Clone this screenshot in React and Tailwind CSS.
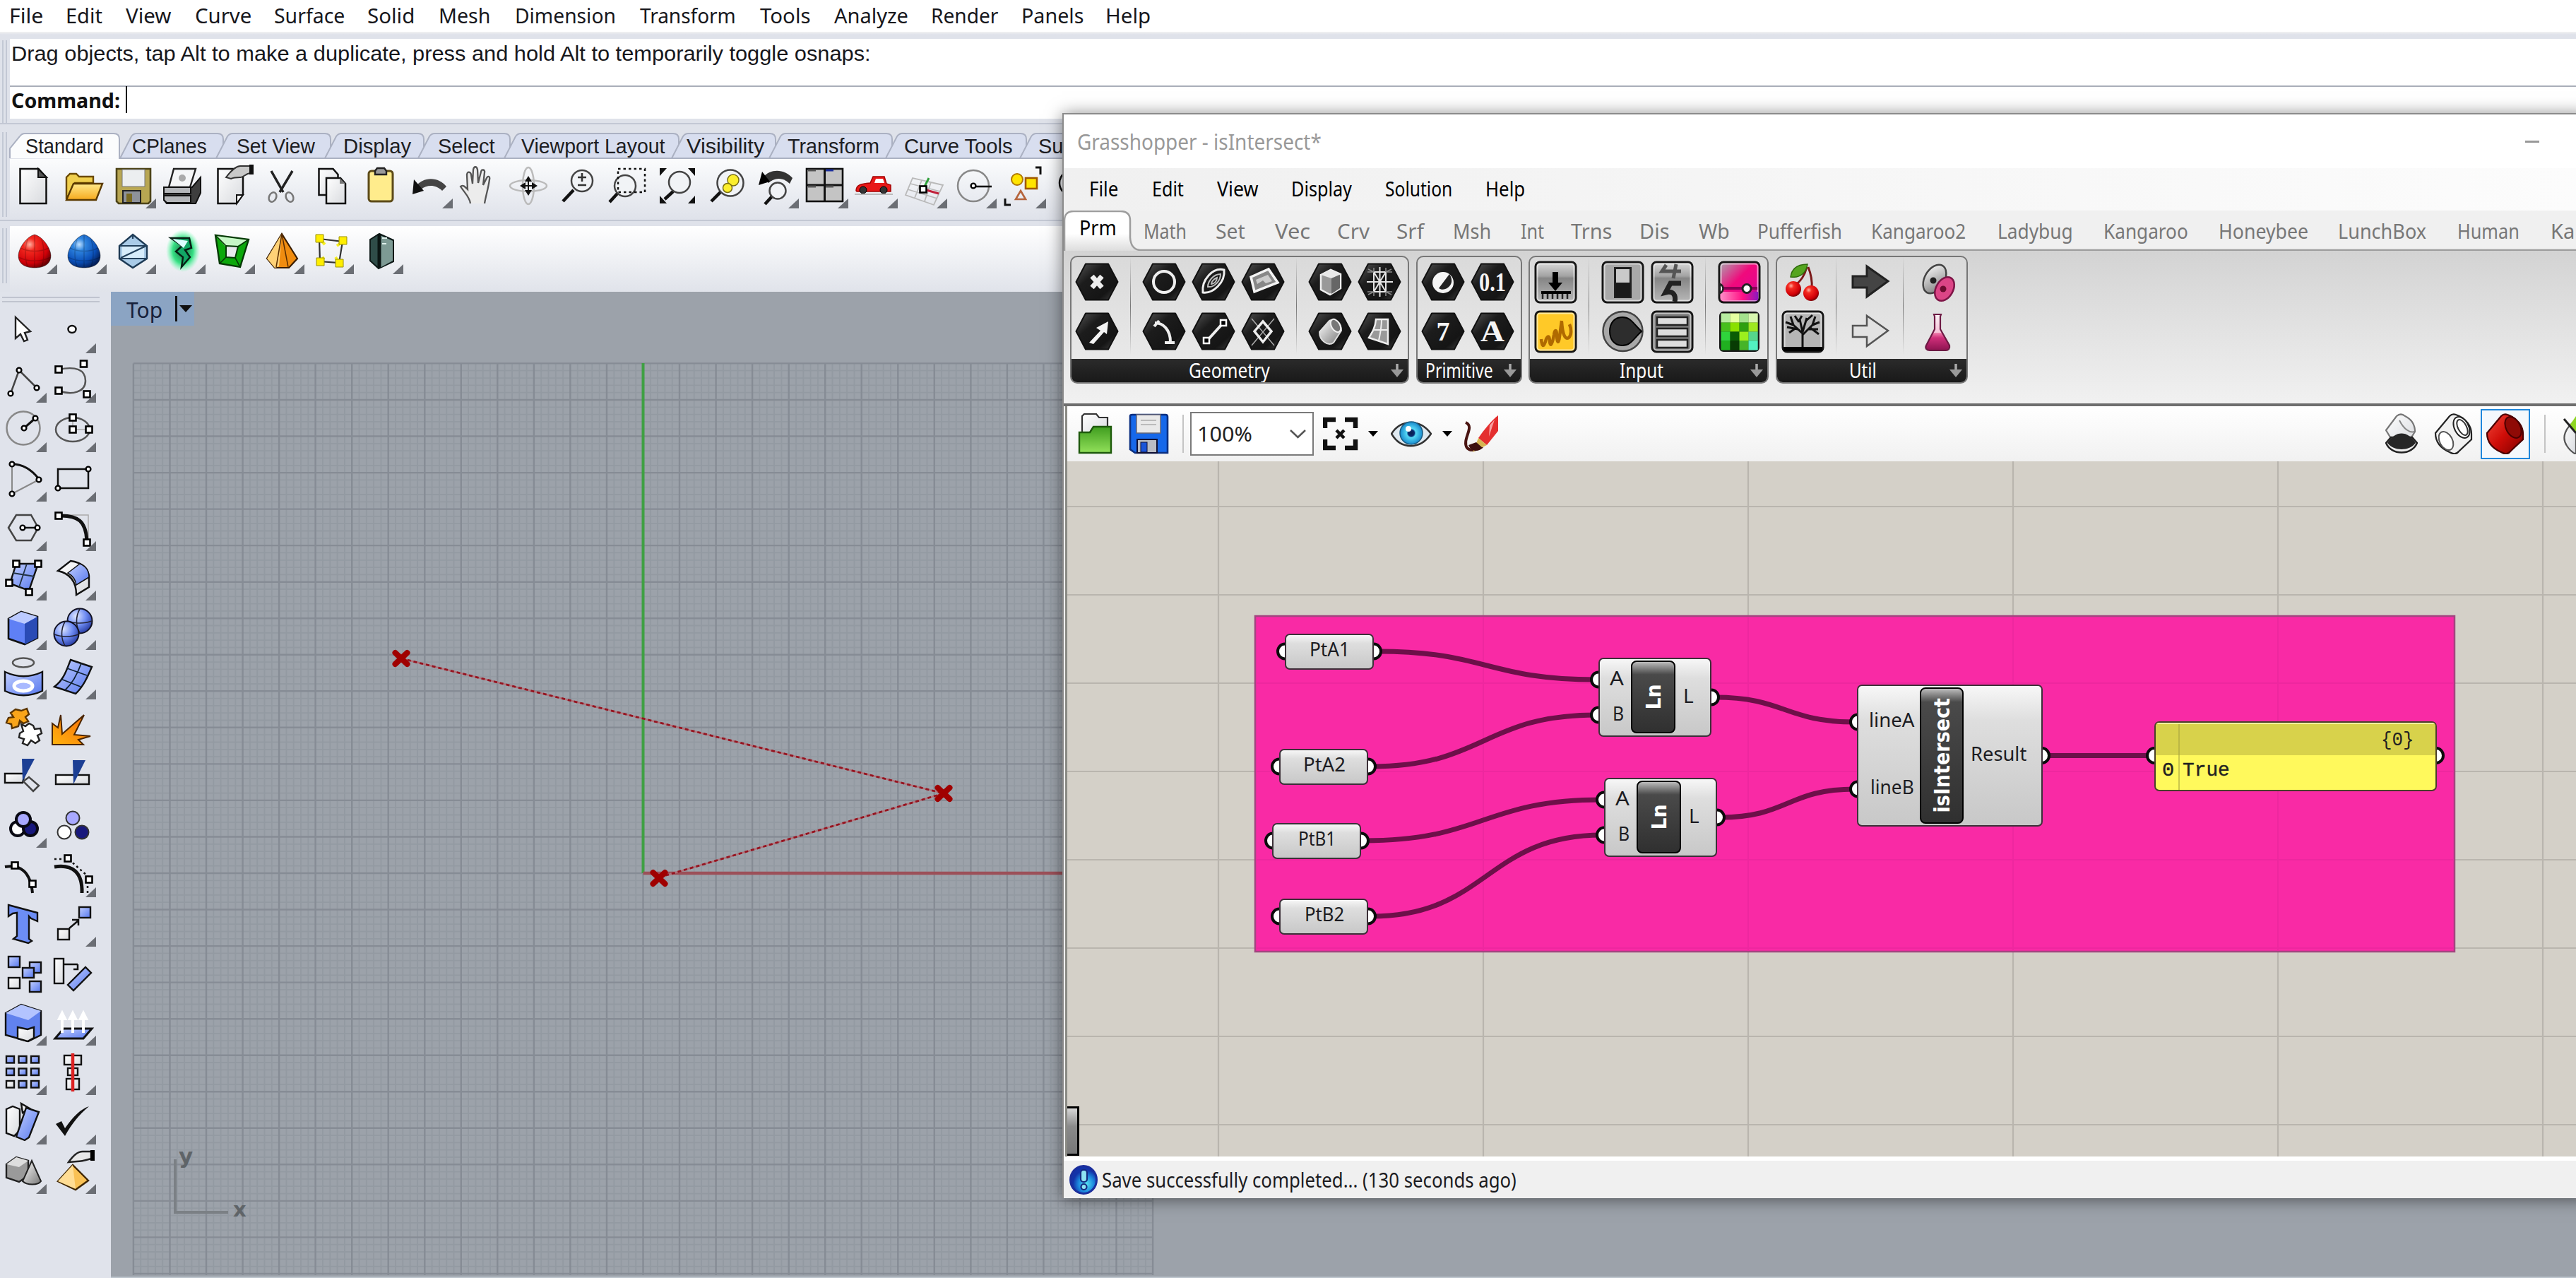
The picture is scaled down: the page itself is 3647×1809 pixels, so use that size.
import React, { useLayoutEffect, useRef, useState } from "react";

const NOTO = "font-['Noto_Sans',sans-serif]";
const ARIAL = "font-['Liberation_Sans',sans-serif]";

/* Text squeezed or stretched horizontally to a given width. */
function Fit({ w, children, className = "" }) {
  const ref = useRef(null);
  const [scale, setScale] = useState(1);
  useLayoutEffect(() => {
    if (ref.current.offsetWidth) setScale((w + 3) / ref.current.offsetWidth);
  }, [w, children]);
  return (
    <span className={"block shrink-0 whitespace-nowrap " + className} style={{ width: w }}>
      <span ref={ref} className="inline-block origin-left whitespace-pre" style={{ transform: `translateX(-1px) scaleX(${scale})` }}>
        {children}
      </span>
    </span>
  );
}

/* A run of labels; each item is [text, start, width]. */
function Labels({ items, origin = 0, className = "" }) {
  let x = origin;
  return (
    <div className={"flex items-center " + className}>
      {items.map(([t, s, w]) => {
        const gap = s - x;
        x = s + w;
        return (
          <div key={t + s} className="shrink-0" style={{ marginLeft: gap }}>
            <Fit w={w}>{t}</Fit>
          </div>
        );
      })}
    </div>
  );
}

const rhinoMenu = [
  ["File", 14, 45], ["Edit", 94, 49], ["View", 179, 61], ["Curve", 277, 77], ["Surface", 389, 97], ["Solid", 521, 64],
  ["Mesh", 622, 70], ["Dimension", 730, 140], ["Transform", 907, 133], ["Tools", 1077, 69], ["Analyze", 1182, 102],
  ["Render", 1319, 92], ["Panels", 1447, 85], ["Help", 1566, 61],
];

const rhinoTabs = [
  ["Standard", 14, 170, 37, 108], ["CPlanes", 168, 316, 188, 103], ["Set View", 304, 468, 336, 108], ["Display", 458, 600, 487, 93],
  ["Select", 590, 722, 621, 78], ["Viewport Layout", 712, 961, 739, 200], ["Visibility", 949, 1098, 973, 107],
  ["Transform", 1087, 1263, 1116, 127], ["Curve Tools", 1252, 1453, 1281, 151], ["Su", 1442, 1660, 1471, 32],
];

const K = { fill: "none", stroke: "#111", strokeWidth: 2.5 };
const Sq = ({ x, y, s = 9 }) => <rect x={x - s / 2} y={y - s / 2} width={s} height={s} fill="#fff" stroke="#000" strokeWidth="2.6" />;
const Dot = ({ x, y, r = 3.4 }) => <circle cx={x} cy={y} r={r} fill="#fff" stroke="#000" strokeWidth="2.4" />;
const Handle = ({ x1, y1, x2, y2 }) => <path d={`M${x1} ${y1}L${x2} ${y2}`} stroke="#111" strokeWidth="4.5" />;
const Lens = ({ x, y, r }) => <circle cx={x} cy={y} r={r} fill="#f1f3f6" stroke="#444" strokeWidth="2.5" />;

function Defs() {
  return (
    <svg className="absolute size-0">
      <defs>
        <linearGradient id="blue" x1="0" y1="0" x2="1" y2="1"><stop offset="0" stopColor="#c3d0ff" /><stop offset="1" stopColor="#5577ee" /></linearGradient>
        <linearGradient id="gold" x1="0" y1="0" x2="0" y2="1"><stop offset="0" stopColor="#ffe98a" /><stop offset="1" stopColor="#f5a91c" /></linearGradient>
        <linearGradient id="paper" x1="0" y1="0" x2="1" y2="1"><stop offset="0" stopColor="#fff" /><stop offset="1" stopColor="#d8dade" /></linearGradient>
        <linearGradient id="steel" x1="0" y1="0" x2="0" y2="1"><stop offset="0" stopColor="#dcdcdc" /><stop offset=".35" stopColor="#a2a2a2" /><stop offset=".4" stopColor="#858585" /><stop offset="1" stopColor="#b9b9b9" /></linearGradient>
        <linearGradient id="hex" x1="0" y1="0" x2="1" y2="1"><stop offset="0" stopColor="#555" /><stop offset=".35" stopColor="#1c1c1c" /><stop offset=".75" stopColor="#151515" /><stop offset="1" stopColor="#444" /></linearGradient>
        <linearGradient id="solid" x1="0" y1="0" x2="1" y2="1"><stop offset="0" stopColor="#fff" /><stop offset="1" stopColor="#777" /></linearGradient>
        <linearGradient id="green" x1="0" y1="0" x2="0" y2="1"><stop offset="0" stopColor="#3f9d1f" /><stop offset="1" stopColor="#92e05a" /></linearGradient>
        <linearGradient id="redpipe" x1="0" y1="0" x2="1" y2="1"><stop offset="0" stopColor="#f2483a" /><stop offset=".5" stopColor="#cf0d08" /><stop offset="1" stopColor="#7d0000" /></linearGradient>
        <linearGradient id="pinkbox" x1="0" y1="0" x2="1" y2="1"><stop offset="0" stopColor="#a9a9b0" /><stop offset=".45" stopColor="#f00a7c" /><stop offset=".7" stopColor="#e8078a" /><stop offset="1" stopColor="#7a10b8" /></linearGradient>
        <linearGradient id="pinkbase" x1="0" y1="0" x2="1" y2="0"><stop offset="0" stopColor="#ff8cc6" /><stop offset=".6" stopColor="#ff0f84" /><stop offset="1" stopColor="#8a18c0" /></linearGradient>
        <linearGradient id="lava" x1="0" y1="0" x2="0" y2="1"><stop offset="0" stopColor="#fbf3f7" /><stop offset=".5" stopColor="#f6c2d8" /><stop offset=".51" stopColor="#f284b0" /><stop offset=".65" stopColor="#cf2f7a" /><stop offset="1" stopColor="#8d1350" /></linearGradient>
        <linearGradient id="flame" x1="0" y1="1" x2="1" y2="0"><stop offset="0" stopColor="#ffb30f" /><stop offset="1" stopColor="#f76b0a" /></linearGradient>
        <radialGradient id="eggR" cx=".35" cy=".3" r=".75"><stop offset="0" stopColor="#ffb0a0" /><stop offset=".25" stopColor="#f42a20" /><stop offset=".75" stopColor="#d00008" /><stop offset="1" stopColor="#6c0004" /></radialGradient>
        <radialGradient id="eggB" cx=".35" cy=".3" r=".75"><stop offset="0" stopColor="#bfe0ff" /><stop offset=".25" stopColor="#2f85e0" /><stop offset=".7" stopColor="#0a4fb8" /><stop offset="1" stopColor="#04215c" /></radialGradient>
        <radialGradient id="ball" cx=".35" cy=".3" r=".8"><stop offset="0" stopColor="#dfe7ff" /><stop offset=".5" stopColor="#6f8cf2" /><stop offset="1" stopColor="#1c2f96" /></radialGradient>
        <radialGradient id="glow"><stop offset="0" stopColor="#1f6b45" /><stop offset=".6" stopColor="#35e083" /><stop offset="1" stopColor="#6dffb0" stopOpacity="0" /></radialGradient>
        <radialGradient id="iris"><stop offset="0" stopColor="#0b1d4a" /><stop offset=".28" stopColor="#082a70" /><stop offset=".4" stopColor="#55d8f5" /><stop offset="1" stopColor="#1889cc" /></radialGradient>
        <radialGradient id="info" cx=".6" cy=".65"><stop offset="0" stopColor="#58e6f2" /><stop offset=".6" stopColor="#1b86dd" /><stop offset="1" stopColor="#1333a8" /></radialGradient>
      </defs>
    </svg>
  );
}

const topIcons = [
  [<g><path d="M16.500 13h26l11 12v37h-37z" fill="url(#paper)" {...{ stroke: "#111", strokeWidth: 2.5 }} /><path d="M42 13v12h12z" fill="#555" stroke="#111" strokeWidth="2" /></g>],
  [<g><path d="M12 56V25l5-5h9l4 4h20v9H24z" fill="#f0cf4e" stroke="#6b4a00" strokeWidth="2.4" /><path d="M12 57L22 34h41L54 57z" fill="url(#gold)" stroke="#5a3a00" strokeWidth="2.400" /></g>],
  [<g><path d="M13 13h48v46l-3 3H16l-3-3z" fill="#b8a652" stroke="#4d4418" strokeWidth="2.6" /><rect x="21" y="14" width="32" height="24" fill="#eceef0" stroke="#777" /><path d="M22 44h25v17H22z" fill="#8e929a" stroke="#222" strokeWidth="2" /><rect x="27" y="48" width="8" height="12" fill="#7a6a22" /></g>, 1],
  [<g><path d="M24 13h31l-8 26H17z" fill="#f5f6f7" stroke="#222" strokeWidth="2.4" /><circle cx="36" cy="26" r="5" fill="#aaa" /><path d="M10 39h40l12-14v22l-7 15H14l-4-5z" fill="#3e3e3e" stroke="#111" strokeWidth="2" /><path d="M10 39h38v9H10zM10 51h38v10H14l-4-4z" fill="#b5b7ba" stroke="#111" strokeWidth="2" /></g>],
  [<g><path d="M16.500 13H52v36l-9 13H16.500z" fill="url(#paper)" stroke="#111" strokeWidth="2.5" /><path d="M43 62V50h9z" fill="#fff" stroke="#111" strokeWidth="2" /><path d="M28 25c6-8 12-15 20-16h14v10c-7 1-10 7-14 6-5 0-9 0-13 2z" fill="#c9c9c9" stroke="#333" strokeWidth="2" /><rect x="61" y="7" width="6" height="14" fill="#111" /></g>],
  [<g><path d="M22 16l17 30M52 16L34 46" stroke="#222" strokeWidth="3.500" /><ellipse cx="24" cy="53" rx="5" ry="7" {...K} stroke="#777" transform="rotate(25 24 53)" /><ellipse cx="48" cy="53" rx="5" ry="7" {...K} stroke="#777" transform="rotate(-25 48 53)" /></g>],
  [<g><path d="M19.500 13h20l7 8v29h-27z" fill="url(#paper)" stroke="#111" strokeWidth="2.5" /><path d="M30 26h20l7 8v28H30z" fill="url(#paper)" stroke="#111" strokeWidth="2.5" /><path d="M49 26v8h8z" fill="#777" /></g>],
  [<g><rect x="20" y="16" width="34" height="43" rx="4" fill="#ffec8c" stroke="#5c4a18" strokeWidth="3" /><path d="M29 21v-5l3-4h10l3 4v5z" fill="#999" stroke="#222" strokeWidth="2.4" /></g>],
  [<g><path d="M18 36c12-13 32-11 42 2l-6 6c-9-9-21-9-30-2z" fill="#444" /><path d="M12 49l2-21 14 16z" fill="#111" /></g>, 1],
  [<path d="M24 62c-1-9-9-16-14-24 3-3 6 0 10 4l-1-21c1-5 5-4 6 0l2 13 1-20c1-5 5-5 6 0l1 19 4-16c1-4 6-3 5 1l-2 18 5-10c2-4 5-2 4 2-2 14-5 22-7 34" fill="#ececec" stroke="#555" strokeWidth="2.300" />],
  [<g><ellipse cx="36" cy="37" rx="8" ry="26" {...K} stroke="#bbb" /><ellipse cx="36" cy="37" rx="26" ry="8" {...K} stroke="#bbb" /><path d="M36 23l5 8H31zM36 51l5-8H31zM24 37l8-5v10zM49 37l-8-5v10z" fill="#111" /><path d="M36 26v22M26 37h20" stroke="#111" strokeWidth="2" /></g>],
  [<g><Handle x1={30} y1={43} x2={15} y2={59} /><Lens x={42} y={30} r={15} /><path d="M42 19v12M36 25h12M36 36h12" stroke="#333" strokeWidth="2.600" /></g>],
  [<g><Handle x1={22} y1={48} x2={11} y2={60} /><Lens x={33} y={37} r={15} /><rect x="23" y="13" width="38" height="33" {...K} strokeDasharray="3.500 4" /></g>],
  [<g><Handle x1={31} y1={45} x2={19} y2={56} /><Lens x={40} y={32} r={15} /><path d="M12 12h10L12 23zM62 12H52l10 11zM12 62h10L12 51zM62 62H52l10-11z" fill="#111" /></g>],
  [<g><Handle x1={29} y1={45} x2={15} y2={59} /><Lens x={42} y={33} r={18.500} /><circle cx="46" cy="29" r="8" fill="#fbee2c" stroke="#776c10" strokeWidth="1.500" /><circle cx="38" cy="40" r="6.500" fill="#fbee2c" stroke="#776c10" strokeWidth="1.500" /></g>],
  [<g><path d="M18 25c12-14 32-11 42 1l-4 8c-9-9-21-9-30-1z" fill="#333" /><path d="M12 36l5-19 11 14z" fill="#000" /><Handle x1={31} y1={52} x2={21} y2={63} /><Lens x={39} y={44} r={11.500} /></g>, 1],
  [<g><rect x="10" y="13" width="51" height="46" fill="#c4c4c4" stroke="#111" strokeWidth="2.600" /><path d="M35.500 13v46M10 36h51" stroke="#111" strokeWidth="3" /><path d="M12 15h11M12 38h11M37 38h11" stroke="#555" strokeWidth="3" /><path d="M37 15h11" stroke="#1c2f9c" strokeWidth="3" /></g>, 1],
  [<g><path d="M10 44c0-8 6-10 20-11l4-9h16l3 10 6 2v9H11z" fill="#e81818" stroke="#a30000" strokeWidth="1.500" /><path d="M36 33l2-6h10l2 6z" fill="#fff" /><circle cx="20" cy="43" r="5" fill="#333" stroke="#000" /><circle cx="49" cy="43" r="5" fill="#333" stroke="#000" /><path d="M8 49h54" stroke="#bbb" strokeWidth="2" /></g>, 1],
  [<g><path d="M20 26L10 50l40 14 13-28zM17 34l42 11M13 42l42 13M33 29L23 54M46 32L37 59" {...K} stroke="#b9b9b9" strokeWidth="1.800" /><path d="M36 40l7-14" stroke="#2fa03a" strokeWidth="3" /><path d="M36 42l21 6" stroke="#c0203a" strokeWidth="3" /><Sq x={35} y={42} /></g>, 1],
  [<g><circle cx="36" cy="37" r="22" {...K} stroke="#888" /><path d="M36 38h26" stroke="#111" strokeWidth="2.600" /><Dot x={36} y={37} /></g>, 1],
  [<g><path d="M54 11h7v10M11 55v9h8" {...K} strokeWidth="3" /><circle cx="28" cy="28" r="8" fill="#ffe400" stroke="#b07800" strokeWidth="2" /><rect x="40" y="26" width="16" height="15" fill="#ffe400" stroke="#a05a00" strokeWidth="2.600" /><path d="M33 44l7 12H26z" fill="none" stroke="#b5643c" strokeWidth="2.600" /></g>, 1],
  [<circle cx="36" cy="33" r="18" {...K} />],
];

const Egg = ({ id }) => (
  <g><path d="M37 13c12 3 23 20 23 30 0 12-10 17-23 17s-23-5-23-17c0-10 11-27 23-30z" fill={`url(#${id})`} stroke="#222" strokeOpacity=".5" /><path d="M37 14v45M17 32c12 6 28 6 40 0M14 45c15 7 31 7 46 0M27 20c-4 12-4 28 0 38M47 20c4 12 4 28 0 38" fill="none" stroke="#000" strokeOpacity=".2" strokeWidth="1.500" /></g>
);

const subIcons = [
  <Egg id="eggR" />,
  <Egg id="eggB" />,
  <g><path d="M36 13l20 16v18L36 60 17 47V29z" fill="#a9cbe8" stroke="#1d3a55" strokeWidth="2.400" /><path d="M21 30h31v16H21z" fill="#d6ecfb" /><path d="M17 29h39M17 47h39M19 46l36-17M36 13v6" stroke="#22405c" strokeWidth="2.200" /></g>,
  <g><ellipse cx="37" cy="36" rx="24" ry="30" fill="url(#glow)" /><path d="M20 18h26l3 14-9 3 7 10-12 14 2-14-10-8 9-8z" fill="#12a765" stroke="#061f14" strokeWidth="2.500" /><path d="M22 19l22 3-6 10z" fill="#dff" /></g>,
  <g><path d="M13 14l47 6-12 39-29-5z" fill="#0ca80c" stroke="#063a06" strokeWidth="2.400" /><path d="M14 15l45 6-16 9-14 2z" fill="#c7f7c7" /><path d="M28 29l17 1-4 16-13-1z" fill="#e9e9ee" stroke="#063a06" strokeWidth="2" /><path d="M13 14l15 15M60 20L45 30M48 59l-7-13M19 54l9-9" stroke="#063a06" strokeWidth="1.600" /></g>,
  <g><path d="M37 12L16 47l11 13h20l12-13z" fill="#f08c10" stroke="#3a1d00" strokeWidth="2.200" /><path d="M37 12L16 47l11 13 6-2z" fill="#ffd277" /><path d="M37 12l-8 47M37 12l9 47" stroke="#5a2d00" strokeWidth="1.500" /></g>,
  <g><path d="M20 19l33 4-5 30-27-2z" fill="none" stroke="#333" strokeWidth="2.200" /><path d="M20 19l8 8M53 23l-8 6M48 53l-5-8M21 51l6-6" stroke="#f6ee20" strokeWidth="4" /><path d="M15 13h11v11H15zM48 16h11v11H48zM43 48h11v11H43zM16 46h11v11H16z" fill="#ffee00" stroke="#9a9000" /></g>,
  <g><path d="M22 20l13-8 20 9v30L34 61 22 50z" fill="#2f4c48" stroke="#0e1a18" strokeWidth="2" /><path d="M36 14l18 8v28L36 60z" fill="#7d9a94" /><path d="M35 12v48" stroke="#0b1513" strokeWidth="5" /><path d="M39 18h7M39 26h6" stroke="#dff0ec" strokeWidth="2" /></g>,
];

const B = { fill: "url(#blue)", stroke: "#111", strokeWidth: 2.4 };
const W = { fill: "url(#paper)", stroke: "#111", strokeWidth: 2.4 };

const sideIcons = [
  [[<path d="M22 17v30l7-6 5 10 5-2-4-10 8-2z" fill="#fff" stroke="#222" strokeWidth="2.400" />], [<ellipse cx="32" cy="34" rx="5.500" ry="5" {...K} fill="#fff" />, 1]],
  [[<g><path d="M15 55L27 22l25 25" {...K} stroke="#444" /><Dot x={15} y={55} /><Dot x={27} y={22} /><Dot x={52} y={47} /></g>, 1], [<g><path d="M13 21c24-5 38 0 38 16S32 58 13 51" {...K} stroke="#555" /><Sq x={13} y={21} /><Sq x={13} y={51} /><Sq x={48.500} y={13} /><Sq x={53} y={56} /></g>, 1]],
  [[<g><circle cx="33" cy="34" r="23.500" {...K} stroke="#888" /><path d="M34 34l16-14" {...K} strokeWidth="3" /><Dot x={34} y={34} /><Dot x={50} y={20} /></g>, 1], [<g><ellipse cx="33" cy="36" rx="24" ry="17" {...K} stroke="#555" /><path d="M33 19v17h22" {...K} stroke="#aaa" strokeWidth="1.500" /><Sq x={33} y={36} /><Sq x={33} y={19} /><Sq x={56} y={36} /></g>, 1]],
  [[<g><path d="M17 15v42l38-20" {...K} stroke="#888" strokeWidth="2" /><path d="M17 15c16 0 28 8 38 21" {...K} strokeWidth="3" /><Dot x={17} y={15} /><Dot x={55} y={37} /><Dot x={17} y={57} /></g>, 1], [<g><rect x="12" y="22" width="43" height="27" {...K} /><Dot x={55} y={22} /><Dot x={12} y={49} /></g>, 1]],
  [[<g><path d="M12 35l11-18h21l10 18-10 18H23z" {...K} stroke="#444" /><path d="M32 35h21" {...K} /><Dot x={32} y={35} /><Dot x={53} y={35} /></g>, 1], [<g><path d="M13 17h42v38" {...K} stroke="#aaa" strokeWidth="1.500" /><path d="M13 18c28-1 39 8 40 37" {...K} strokeWidth="5" /><Sq x={13} y={18} /><Sq x={53} y={56} /></g>, 1]],
  [[<g><path d="M23 16h31L41 54 14 44z" {...B} /><path d="M38 16L27 49M18 29l31 5" stroke="#234" strokeWidth="1.800" /><Sq x={23} y={16} /><Sq x={54} y={16} /><Sq x={13} y={43} /><Sq x={41} y={56} /></g>, 1], [<g><path d="M12 26l18-14c14 2 24 9 26 21v16L38 60c0-18-8-30-26-34z" {...W} /><path d="M26 29l17-13c8 3 13 9 13 19L38 46c-1-8-5-13-12-17z" fill="url(#blue)" stroke="#111" strokeWidth="1.500" /></g>, 1]],
  [[<g><path d="M12 24l18-10 23 7v30l-18 9-23-8z" fill="#5f80f5" stroke="#111" strokeWidth="2.600" /><path d="M12 24l18-10 23 7-18 10z" fill="#bccbff" /><path d="M53 21v30l-18 9V31z" fill="#2a4bb5" /></g>, 1], [<g><circle cx="43" cy="27" r="17.500" fill="url(#ball)" stroke="#112" strokeWidth="2" /><path d="M26 27c10 4 24 4 34 0M43 10c-6 10-6 24 0 34" {...K} stroke="#223" strokeWidth="1.600" /><circle cx="24" cy="45" r="17.500" fill="url(#ball)" stroke="#112" strokeWidth="2" /><path d="M7 46c10 4 24 4 34 0M22 28c-6 10-6 24 0 34" {...K} stroke="#223" strokeWidth="1.600" /></g>, 1]],
  [[<g><ellipse cx="33" cy="16" rx="15" ry="6.500" {...K} stroke="#555" /><path d="M7 29c17 8 36 8 53 0v27c-17 8-36 8-53 0z" {...B} /><ellipse cx="33" cy="49" rx="13" ry="7" fill="#a9b9ff" stroke="#fff" strokeWidth="5" /></g>, 1], [<g><path d="M30 12l30 10c-6 14-12 28-23 38L7 50c14-10 18-26 23-38z" {...B} /><path d="M25 24l28 10M16 39l28 11M45 17c-5 14-12 28-23 38" {...K} stroke="#123" strokeWidth="1.800" /></g>, 1]],
  [[<g><path d="M22 12l8 2 8-3 3 8-5 4 4 6-7 3-5-4-2 8-9 3-1-6-7-2 3-7 7-1-4-6z" fill="#f9a51a" stroke="#5b3500" strokeWidth="2.400" /><path d="M30 33l6 3 5-4 6 3 2 5 8-1 2 7-6 3 3 7-6 4-6-4-5 7-7-3 2-6-7-2 1-6 5-3z" fill="#fff" stroke="#222" strokeWidth="2.400" /></g>], [<path d="M4 62V32l8 6 4-18 2 27 31-27-14 28 23 2-17 5 7 7z" fill="url(#flame)" stroke="#4b2500" strokeWidth="2" />]],
  [[<g><path d="M7 33h28l-3 13H7z" {...W} /><path d="M33 44l8-6 14 12-8 8z" {...K} stroke="#444" /><path d="M31 12h18L32 44z" fill="#1c3f94" /></g>], [<g><rect x="9" y="35" width="47" height="13" {...W} /><path d="M33 14h18L34 48z" fill="#1c3f94" /></g>]],
  [[<g stroke="#0a0a14" strokeWidth="4"><circle cx="25" cy="41" r="10" fill="#fff" /><circle cx="43" cy="41" r="10" fill="#18187c" /><circle cx="33" cy="28" r="10" fill="#a9a9ff" /></g>, 1], [<g stroke="#333" strokeWidth="2"><circle cx="21" cy="46" r="9.500" fill="#fff" /><circle cx="46" cy="46" r="9.500" fill="#18187c" /><circle cx="33" cy="26" r="9.500" fill="#a9a9ff" /></g>]],
  [[<g><path d="M7 25c22-4 36 7 39 37" {...K} strokeWidth="4" /><Sq x={21} y={23} /><Sq x={46} y={49} /></g>], [<g><path d="M7 25c26-4 40 8 39 37" {...K} strokeWidth="5" /><path d="M7 14h20l27 24v24" {...K} strokeDasharray="3 4" /><Sq x={26} y={13} /><Sq x={56} y={43} /></g>, 1]],
  [[<path d="M12 9l41 11v12l-9-4-3-3v32l4 3-5 3-21-6 5-4V20l-6 1-6 4z" fill="#6c8df5" stroke="#111" strokeWidth="2.400" />], [<g><rect x="12" y="43" width="16" height="15" {...W} /><rect x="42" y="12" width="16" height="15" {...B} /><path d="M28 42l13-11M32 30h9v8" {...K} /></g>, 1]],
  [[<g><rect x="12" y="12" width="16" height="15" {...B} /><rect x="42" y="20" width="16" height="15" {...B} /><rect x="32" y="28" width="16" height="14" {...B} /><rect x="12" y="42" width="16" height="15" {...W} /><rect x="42" y="47" width="16" height="15" {...B} /></g>], [<g><rect x="7" y="15" width="13" height="35" {...W} /><path d="M20 23h20M34 30h6v-7" {...K} /><path d="M26 52l25-25 8 8-25 25z" {...B} /></g>]],
  [[<g><path d="M8 22l22-12 28 9v34l-18 9-32-9z" fill="#6182ee" stroke="#111" strokeWidth="2.400" /><path d="M8 22l22-12 28 9-18 13z" fill="#b3c4ff" /><path d="M25 42l14 3 9-3v15l-9 5-14-4z" {...W} /></g>, 1], [<g><path d="M8 58l12-14h40L48 58z" {...B} strokeWidth="3" /><path d="M18 50V30h-4l4-8 4 8h-4zM33 50V30h-4l4-8 4 8h-4zM48 50V30h-4l4-8 4 8h-4z" fill="#fff" stroke="#fff" strokeWidth="4" /></g>, 1]],
  [[<g>{[0, 1, 2].map((r) => [0, 1, 2].map((c) => <rect key={r + "" + c} x={9 + 17.500 * c} y={13 + 17.500 * r} width="11" height="9.500" {...(r === 2 && c === 0 ? W : B)} />))}</g>, 1], [<g><rect x="21" y="12" width="24" height="13" {...W} /><rect x="26" y="30" width="14" height="10" {...W} /><rect x="24" y="45" width="18" height="15" {...W} /><path d="M33 9v54" stroke="#d22" strokeWidth="4.500" /></g>, 1]],
  [[<g><path d="M9 18l9-4 10 4v30l-8 8-11-4z" {...W} /><path d="M30 10l12 7-10 6z" {...W} /><path d="M37 16l18 6-14 36-6 4-12-5z" {...B} /></g>, 1], [<path d="M9 39l8-4 5 10C34 28 44 18 56 14 42 26 32 38 22 56z" fill="#111" />, 1]],
  [[<g><path d="M9 26l14-10 17 5v21l-13 9-18-6z" fill="#9a9a9a" stroke="#222" strokeWidth="2.400" /><path d="M9 26l14-10 17 5-13 9z" fill="#ddd" /><path d="M45 21l13 29c-4 6-20 6-26 0z" fill="url(#solid)" stroke="#222" strokeWidth="2" /></g>, 1], [<g><path d="M12 50l21-23 22 22-18 13z" fill="#f9c155" stroke="#3f2600" strokeWidth="2.400" /><path d="M33 27l4 34L12 50z" fill="#ffdd94" /><path d="M27 23c6-8 12-15 20-15h12v10c-7 2-12 4-20 4z" fill="#e8e8e8" stroke="#222" strokeWidth="2.400" /><rect x="58" y="6" width="6" height="15" fill="#000" /></g>, 1]],
];

function Cell({ icon, tri, side }) {
  return (
    <svg viewBox="0 0 70 70" className="size-[70px] shrink-0 overflow-visible">
      {icon}
      {tri ? <path d={side ? "M66 54v14H51z" : "M69 55v14H54z"} fill="#6b6e74" /> : null}
    </svg>
  );
}

function Grip({ className }) {
  return <div className={"w-[7px] border-x-2 border-[#c3c8d4] " + className} />;
}

function RhinoTabs() {
  return (
    <div className={"ml-[14px] flex h-[37px] text-[29px] leading-[39px] text-[#1d1d22] " + ARIAL}>
      {rhinoTabs.map(([t, a, b, tx, tw], i) => {
        const next = rhinoTabs[i + 1] ? rhinoTabs[i + 1][1] : b;
        const w = b - a;
        return (
          <div key={t} className="relative shrink-0" style={{ width: next - a }}>
            <svg className="absolute left-0 top-0 overflow-visible" width={w} height="37">
              <path d={i ? `M2 36L18 5q3-4 7-4H${w - 8}q8 0 8 8V36` : `M0 36V22L14 5q3-4 7-4H${w - 9}q8 0 8 8V37`} fill={i ? "#d8deef" : "#fbfcfd"} stroke="#abb1c2" strokeWidth="2" />
              {i ? <path d={`M0 36H${w}`} stroke="#abb1c2" strokeWidth="2" /> : null}
            </svg>
            <div className="relative" style={{ marginLeft: tx - a }}><Fit w={tw}>{t}</Fit></div>
          </div>
        );
      })}
    </div>
  );
}

const GX = 753.5, GY = 823, P = 51.54;
function Viewport() {
  const minor = [], major = [];
  for (let i = -70; i <= 70; i++) {
    const x = GX + (i * P) / 5;
    const d = `M${x.toFixed(1)} ${GY - 14 * P}V1392`;
    (i % 5 ? minor : major).push(d);
    const y = GY + (i * P) / 5;
    if (y < 1393) (i % 5 ? minor : major).push(`M${GX - 14 * P} ${y.toFixed(1)}H${GX + 14 * P}`);
  }
  return (
    <div className="relative flex-1 overflow-hidden border-b-2 border-[#bcc4cc] bg-[#9ca2aa]">
      <svg className="absolute left-0 top-0" width="3490" height="1396">
        <path d={minor.join("")} stroke="#939aa2" strokeWidth="1.800" />
        <path d={major.join("")} stroke="#868c95" strokeWidth="2.400" />
        <path d={`M${GX} 101V${GY}`} stroke="#3fa043" strokeWidth="4" />
        <path d={`M${GX} ${GY}H1500`} stroke="#9c5059" strokeWidth="4.500" />
        <path d="M411 519L1179 710L776 829" fill="none" stroke="#b0747c" strokeWidth="2.400" />
        <path d="M411 519L1179 710L776 829" fill="none" stroke="#941420" strokeWidth="2.800" strokeDasharray="5 4" />
        {[[411, 519], [1179, 710], [776, 830]].map(([x, y]) => (
          <path key={x} d={`M${x - 8.5} ${y - 8}l17 16m0-16l-17 16`} stroke="#a00000" strokeWidth="8" strokeLinecap="round" />
        ))}
        <path d="M91 1228V1303H166" fill="none" stroke="#7b8085" strokeWidth="4" />
      </svg>
      <div className="relative flex h-[48px] w-[118px] items-center bg-[#8ba4c3] text-[30px] leading-[48px] text-[#17213a]">
        <div className={"ml-[23px] mt-[3px] " + NOTO}><Fit w={48}>Top</Fit></div>
        <div className="ml-[20px] h-[36px] w-[3px] bg-[#111]" />
        <svg className="ml-[3px]" width="18" height="10"><path d="M0 0h18l-9 10z" fill="#111" /></svg>
      </div>
      <span className="absolute left-[96px] top-[1205px] font-['DejaVu_Sans',sans-serif] text-[31px] leading-[36px] font-bold text-[#5f6468]">y</span>
      <span className="absolute left-[173px] top-[1281px] font-['DejaVu_Sans',sans-serif] text-[29px] leading-[36px] font-bold text-[#5f6468]">x</span>
    </div>
  );
}

/* ---------- Grasshopper window ---------- */

const ghMenu = [["File", 1543, 38], ["Edit", 1632, 42], ["View", 1724, 55], ["Display", 1829, 83], ["Solution", 1962, 92], ["Help", 2104, 53]];
const ghTabs = [
  ["Math", 1620, 58], ["Set", 1722, 39], ["Vec", 1806, 47], ["Crv", 1894, 43], ["Srf", 1978, 36], ["Msh", 2058, 51], ["Int", 2154, 30],
  ["Trns", 2225, 55], ["Dis", 2322, 40], ["Wb", 2406, 41], ["Pufferfish", 2489, 117], ["Kangaroo2", 2650, 131], ["Ladybug", 2829, 104],
  ["Kangaroo", 2979, 117], ["Honeybee", 3142, 124], ["LunchBox", 3311, 122], ["Human", 3480, 85], ["Ka", 3612, 31],
];

const H = { fill: "none", stroke: "#eee", strokeWidth: 3 };
const Hex = ({ children }) => (
  <g><path d="M5.500 35L19 9.500h32L64.500 35 51 60.500H19z" fill="url(#hex)" stroke="#111" strokeWidth="2" strokeLinejoin="round" />{children}</g>
);
const Box = ({ fill = "url(#steel)", children }) => (
  <g><rect x="7" y="7" width="57" height="57" rx="6" fill={fill} stroke="#161616" strokeWidth="3" /><rect x="9.500" y="9.500" width="52" height="52" rx="4" fill="none" stroke="#fff" strokeOpacity=".55" strokeWidth="2" />{children}</g>
);
const arrowD = "M11 27h20V13l30 21-30 22V43H11z";
const Glyph = ({ children, size = 34, y = 47, w }) => <text x="35" y={y} textAnchor="middle" fontFamily="Liberation Serif, serif" fontWeight="bold" fontSize={size} fill="#f4f4f4" textLength={w} lengthAdjust="spacingAndGlyphs">{children}</text>;
const greens = ["#b7eda0", "#e6ffa0", "#a4e28d", "#d8f7b0", "#46c01d", "#8ae000", "#2d9f10", "#9ee820", "#2fd43c", "#0a5d05", "#9cf01e", "#55d68b", "#20b020", "#083c04", "#46b428", "#52f0c0"];
const branches = "M35 58V38L22 26M35 40l14-14M35 36l-4-18M35 36l6-20M28 32l-15-3M22 26l-4-12M22 26l-11-4M30 22l-6-9M30 20l4-7M40 20l9-8M49 26l4-12M49 26l10-4M43 32l14 0M26 30l-10 7M46 30l12 9";

const groups = [
  {
    name: "Geometry", w: 480, lx: 169, lw: 112,
    cols: [
      [<Hex><path d="M28 27l14 16m0-16L28 43" {...H} strokeWidth="7" /></Hex>, <Hex><path d="M24 51l16-17-6-4 17-9-2 18-4-3-15 17z" fill="#f4f4f4" /></Hex>], "|",
      [<Hex><circle cx="35" cy="35" r="15" {...H} strokeWidth="4" /></Hex>, <Hex><path d="M22 23c12 0 22 10 22 27M36 51h14M21 28l7-8" {...H} strokeWidth="4" /></Hex>],
      [<Hex><path d="M50 18C34 14 18 32 20 50c14 2 32-14 30-32z" {...H} /><path d="M45 24c-10 0-18 10-18 18 9 1 18-8 18-18zM40 29c-5 2-8 6-8 9 4 0 8-4 8-9z" {...H} strokeWidth="2" stroke="#bbb" /></Hex>, <Hex><path d="M27 47l20-22" {...H} strokeWidth="4" /><path d="M21 44h8v8h-8zM45 19h8v8h-8z" fill="#000" stroke="#fff" strokeWidth="2.500" /></Hex>],
      [<Hex><path d="M18 28l25-11 13 19-33 13z" fill="#888" {...{ stroke: "#f4f4f4", strokeWidth: 3.5 }} /><path d="M25 32l17-7 6 9-9 3-4-4-8 5z" fill="#ccc" /></Hex>, <Hex><path d="M19 17l32 38M51 17L19 55" {...H} strokeWidth="1.500" stroke="#aaa" /><path d="M35 21l12 14-12 15-12-15z" {...H} strokeWidth="3.500" /></Hex>], "|",
      [<Hex><path d="M22 25l14-7 14 6v20L35 53l-13-7z" fill="#999" stroke="#eee" strokeWidth="2.500" /><path d="M22 25l14-7 14 6-13 6z" fill="#e8e8e8" /><path d="M37 30l12-5v19l-12 8z" fill="#666" /></Hex>, <Hex><path d="M20 36l14-16c8-4 17 2 17 14L40 51c-8 6-20-3-20-15z" fill="url(#solid)" stroke="#ddd" strokeWidth="2" /><ellipse cx="43" cy="27" rx="6" ry="10" transform="rotate(-30 43 27)" fill="#777" stroke="#eee" strokeWidth="2" /></Hex>],
      [<Hex><path d="M27 21h17v28H27zM17 35h37M35.500 14v42M27 21l17 28M44 21L27 49" {...H} strokeWidth="2" stroke="#e4e4e4" /><path d="M27 21l-8-4M44 21l8-4M27 49l-8 4M44 49l8 4M27 21h-9M44 21h9M27 49h-9M44 49h9M27 21v-6M44 21v-6M27 49v6M44 49v6" {...H} strokeWidth="1.600" stroke="#888" /></Hex>, <Hex><path d="M30 18h17v35l-27-9c5-8 9-14 10-26z" fill="#999" stroke="#eee" strokeWidth="2.500" /><path d="M38 18c0 12-2 20-4 30M26 33h21" {...H} strokeWidth="2" /></Hex>],
    ],
  },
  {
    name: "Primitive", w: 150, lx: 14, lw: 93,
    cols: [
      [<Hex><circle cx="35" cy="36" r="15" fill="#f4f4f4" /><path d="M29 44L44 24c5 7 4 15-2 19-4 3-9 4-13 1z" fill="#222" /></Hex>, <Hex><Glyph size={38} y={48}>7</Glyph></Hex>],
      [<Hex><Glyph size={38} y={48} w={38}>0.1</Glyph></Hex>, <Hex><Glyph size={42} y={49} w={34}>A</Glyph></Hex>],
    ],
  },
  {
    name: "Input", w: 340, lx: 130, lw: 59,
    cols: [
      [<Box><path d="M35 21v20" stroke="#000" strokeWidth="8" /><path d="M25 36h20L35 48z" /><path d="M15 50h42" stroke="#000" strokeWidth="4" /><path d="M17 52v7m7-7v7m7-7v7m7-7v7m7-7v7m7-7v7" stroke="#222" strokeWidth="2.500" /></Box>,
        <Box fill="#ffc928"><path d="M15 46c1 12 4 12 7 0 3-6 5-4 5 4 1 8 4 2 6-10 1-8 4-8 4 0 0 14 3 12 4 2l3-22M44 22c1 14 4 26 10 22 4-4 4-12 1-19" fill="none" stroke="#b06a00" strokeWidth="4.500" /></Box>], "|",
      [<Box fill="#a9a9a9"><rect x="24" y="15" width="23" height="42" fill="#1a1a1a" stroke="#222" strokeWidth="2" /><rect x="26" y="17" width="19" height="19" fill="#c9c9c9" /></Box>,
        <g><circle cx="35.500" cy="35" r="28" fill="#a8a8a8" stroke="#444" strokeWidth="2.500" /><path d="M35 15c12 0 15 9 27 20-12 11-15 20-27 20S17 46 17 35s6-20 18-20z" fill="#2d2d2d" stroke="#000" strokeWidth="2" /></g>],
      [<Box fill="url(#steel)"><path d="M27 11l-6 9h27M41 10l-4 20" fill="none" stroke="#555" strokeWidth="5" /><path d="M48 37H33l-7 13c11-3 15 4 13 13" fill="none" stroke="#222" strokeWidth="7" /></Box>,
        <Box fill="#7a7a7a"><path d="M14 15h43v11H14zM14 31h43v11H14zM14 47h43v11H14z" fill="#ddd" stroke="#222" strokeWidth="2.500" /></Box>], "|",
      [<Box fill="url(#pinkbox)"><path d="M9 49h53v12H9z" fill="url(#pinkbase)" /><path d="M9 44h52" stroke="#8a0054" strokeWidth="4" /><path d="M8 38a7 7 0 010 13z" fill="#fff" stroke="#222" strokeWidth="2.500" /><circle cx="46" cy="44.500" r="6" fill="#fff" stroke="#222" strokeWidth="3" /></Box>,
        <g><rect x="7" y="7" width="57" height="57" rx="6" fill="#161616" />{greens.map((c, i) => <rect key={i} x={9.5 + (i % 4) * 13} y={9.5 + Math.floor(i / 4) * 13} width="13.200" height="13.200" fill={c} />)}</g>],
    ],
  },
  {
    name: "Util", w: 272, lx: 105, lw: 36,
    cols: [
      [<g><path d="M41 14C38 26 33 34 24 40M43 14c4 10 6 18 5 30" fill="none" stroke="#7b1a1a" strokeWidth="3" /><path d="M18 28c2-14 12-18 24-18-2 12-10 20-24 18z" fill="#55a520" stroke="#2e6a0c" strokeWidth="1.500" /><circle cx="22" cy="45" r="11" fill="url(#eggR)" /><circle cx="47" cy="51" r="11" fill="url(#eggR)" /></g>,
        <Box fill="#b5b5b5"><path d={branches} fill="none" stroke="#111" strokeWidth="3" /><path d="M8 57h55v6H8z" fill="#000" /></Box>], "|",
      [<path d={arrowD} fill="#444" stroke="#222" strokeWidth="3" />, <path d={arrowD} fill="#e2e2e2" stroke="#555" strokeWidth="2.500" />], "|",
      [<g><ellipse cx="32" cy="31" rx="14" ry="22" transform="rotate(30 32 31)" fill="url(#solid)" stroke="#444" strokeWidth="2.500" /><circle cx="30" cy="33" r="4.500" fill="#222" /><ellipse cx="46" cy="45" rx="12" ry="18" transform="rotate(30 46 45)" fill="#dc4586" stroke="#7d1547" strokeWidth="2.500" /><circle cx="44" cy="45" r="4.500" fill="#6d0c30" /></g>,
        <path d="M31 11h10l-1 3v18l13 23c1 5-2 7-5 7H25c-4 0-7-3-5-7l12-23V14z" fill="url(#lava)" stroke="#6d1a44" strokeWidth="2.200" />],
    ],
  },
];

function Ribbon() {
  return (
    <div className="flex h-[220px] shrink-0 items-start gap-[9.500px] border-b-4 border-[#6e6e6e] bg-linear-to-b from-[#d3d3d3] to-[#f1f1f1] pl-[9px] pt-[7px]">
      {groups.map((g) => (
        <div key={g.name} className="flex h-[181px] shrink-0 flex-col overflow-hidden rounded-[10px] border-2 border-[#777] bg-linear-to-b from-[#dadada] to-[#ececec]" style={{ width: g.w }}>
          <div className="flex h-[144px] pl-px">
            {g.cols.map((c, i) => c === "|" ? (
              <div key={i} className="mx-[12px] h-[138px] w-px shrink-0 bg-linear-to-b from-transparent via-[#777] to-transparent" />
            ) : (
              <div key={i} className="flex w-[70px] shrink-0 flex-col">{c.map((ic, j) => <Cell key={j} icon={ic} />)}</div>
            ))}
          </div>
          <div className={"flex flex-1 items-center justify-between bg-linear-to-b from-[#2b2b2b] to-[#191919] pr-[6px] pb-[2px] text-[29px] leading-[31px] text-white " + NOTO}>
            <div style={{ marginLeft: g.lx - 2 }}><Fit w={g.lw}>{g.name}</Fit></div>
            <svg width="18" height="20"><path d="M9 1v12" stroke="#aaa" strokeWidth="3.500" /><path d="M0 9h18L9 20z" fill="#999" /></svg>
          </div>
        </div>
      ))}
    </div>
  );
}

const Pipe = ({ fill, stroke, inner, line }) => (
  <g><path d="M2 28L22 4q4-4 9-2c15 5 22 17 22 27v8L35 54c-3 4-8 4-13 1C8 49 2 40 2 28z" fill={fill} stroke={stroke} strokeWidth="2.200" /><ellipse cx="39" cy="20" rx="10" ry="16" transform="rotate(-28 39 20)" fill={inner} stroke={stroke} strokeWidth="2" />{line}</g>
);

function CanvasBar() {
  return (
    <div className="flex h-[78px] shrink-0 items-center bg-linear-to-b from-white to-[#f1f1f1]">
      <svg className="ml-[15px] shrink-0" width="50" height="58"><path d="M6 30V4l3-3h17l4 5h12v24z" fill="url(#paper)" stroke="#333" strokeWidth="2.200" /><path d="M2 56V27h15l5-8h25v37z" fill="url(#green)" stroke="#1e5a0c" strokeWidth="2.400" /></svg>
      <svg className="ml-[22px] shrink-0" width="57" height="58"><path d="M2 4q0-2 3-2h47q3 0 3 3v51H9l-7-5z" fill="#1668ea" stroke="#0b2f80" strokeWidth="2.600" /><rect x="11" y="2" width="34" height="26" fill="#e9e9e9" stroke="#667" strokeWidth="1.500" /><path d="M17 10h22M17 16h22" stroke="#bbb" strokeWidth="2" /><path d="M12 37h28v19H12z" fill="#b9bcc4" stroke="#113" strokeWidth="2" /><rect x="17" y="41" width="9" height="14" fill="#1b55d8" stroke="#113" /></svg>
      <div className="ml-[19px] h-[54px] w-[2px] shrink-0 bg-[#c4c4c4]" />
      <div className={"ml-[9px] flex h-[62px] w-[175px] shrink-0 items-center border-2 border-[#7a7a7a] bg-white pl-[9px] text-[29px] text-[#222] " + NOTO}>
        <Fit w={75}>100%</Fit>
        <svg className="ml-[55px]" width="23" height="13"><path d="M1 1l10.500 10L22 1" fill="none" stroke="#555" strokeWidth="2.500" /></svg>
      </div>
      <svg className="ml-[13px] shrink-0" width="50" height="48"><path d="M3 16V4h15M31 4h15v12M46 32v12H31M18 44H3V32" fill="none" stroke="#111" strokeWidth="6.500" /><path d="M19 19l11 11m0-11L19 30" stroke="#111" strokeWidth="4.500" /></svg>
      <svg className="ml-[14px] shrink-0" width="14" height="8"><path d="M0 0h14L7 8z" fill="#000" /></svg>
      <svg className="ml-[18px] shrink-0" width="58" height="38"><path d="M1 19C14-2 42-2 57 19 42 42 14 42 1 19z" fill="#dfe9f0" stroke="#333" strokeWidth="2.600" /><circle cx="29" cy="18" r="16" fill="url(#iris)" stroke="#175a80" strokeWidth="1.500" /><circle cx="25" cy="12" r="4" fill="#fff" /></svg>
      <svg className="ml-[15px] shrink-0" width="14" height="8"><path d="M0 0h14L7 8z" fill="#000" /></svg>
      <svg className="ml-[15px] shrink-0" width="56" height="56"><path d="M4 12c14 6-6 24 2 36 6 6 14 2 22-2" fill="none" stroke="#4a1512" strokeWidth="4" /><path d="M22 34C30 22 42 8 50 2v22L34 44z" fill="#e42f2f" /><path d="M38 16l7-8-8 24z" fill="#f8a0a0" /><path d="M22 34l12 10-20 10z" fill="#d6b552" /><path d="M8 44c4 10 14 10 20 4l-9-8z" fill="#3d1110" /></svg>
      <div className="ml-auto flex shrink-0 items-center">
        <svg className="mr-[23px]" width="46" height="58"><path d="M1 24L16 4q6-5 12 0c10 5 14 13 14 22L32 42H12z" fill="url(#paper)" stroke="#777" strokeWidth="2.200" /><path d="M20 10c6 12 14 18 21 16" fill="none" stroke="#888" strokeWidth="2" /><path d="M1 42L8 34H38L45 42C38 60 8 60 1 42z" fill="#eee" stroke="#222" strokeWidth="2.500" /><path d="M3 42C14 24 32 24 43 42 34 54 12 54 3 42z" fill="#262626" /></svg>
        <svg className="mr-[10px]" width="56" height="58"><Pipe fill="#f1f1f1" stroke="#222" inner="#fff" line={<ellipse cx="17" cy="39" rx="9" ry="14" transform="rotate(-28 17 39)" fill="#fff" stroke="#555" strokeWidth="2" />} /><ellipse cx="40" cy="20" rx="6" ry="12" transform="rotate(-28 40 20)" fill="none" stroke="#333" strokeWidth="2" /></svg>
        <div className="flex h-[71px] w-[70px] items-center justify-center border-[2.500px] border-[#1f87dc] bg-[#f4f8fc]">
          <svg width="56" height="58"><Pipe fill="url(#redpipe)" stroke="#4c0000" inner="#8f0a06" /></svg>
        </div>
        <div className="ml-[20px] h-[54px] w-[2px] bg-[#c4c4c4]" />
        <svg className="ml-[24px]" width="19" height="58"><path d="M19 10C4 20-2 34 6 46q5 8 13 12z" fill="url(#paper)" stroke="#555" strokeWidth="2.200" /><path d="M19 4v22L10 17z" fill="#8ed622" /><path d="M2 8l17 20" stroke="#222" strokeWidth="3" /></svg>
      </div>
    </div>
  );
}

const Port = ({ x, y }) => <ellipse cx={x} cy={y} rx="10" ry="10.500" fill="#fff" stroke="#0b0b0b" strokeWidth="4" />;
const wires = [[1950, 922, 2260, 962], [1942, 1085, 2260, 1012], [1931, 1190, 2268, 1132], [1942, 1297, 2268, 1182], [2428, 987, 2626, 1022], [2436, 1157, 2626, 1117], [2894, 1069.5, 3048, 1069.5]];
const ports = [[1819, 922], [1945, 922], [1811, 1085], [1937, 1085], [1802, 1190], [1927, 1190], [1811, 1297], [1937, 1297], [2263, 962], [2263, 1012], [2423, 987], [2271, 1132], [2271, 1182], [2431, 1157], [2630, 1022], [2630, 1117], [2891, 1069.5], [3050, 1069.5], [3449, 1069.5]];
const params = [["PtA1", 1819, 897, 54], ["PtA2", 1811, 1059.5, 57], ["PtB1", 1801, 1164.5, 50], ["PtB2", 1811, 1271.5, 53]];

const nodeCls = "absolute rounded-[7px] border-[2.500px] border-[#3c3038] bg-linear-to-b from-[#f7f7f7] from-0% via-[#dedede] via-25% to-[#c8c8c8] text-[28px] leading-[30px] text-[#1c1c22] " + NOTO;

function Caption({ children, size, len, className }) {
  return (
    <div className={"absolute flex items-center justify-center rounded-[8px] border-[2.500px] border-black bg-linear-to-b from-[#bdbdbd] from-0% to-[#303030] " + className}>
      <div className="-rotate-90 font-['DejaVu_Sans',sans-serif] font-bold text-white" style={{ fontSize: size }}><Fit w={len}>{children}</Fit></div>
    </div>
  );
}

function LnNode({ className }) {
  return (
    <div className={"h-[112px] w-[160px] " + nodeCls + " " + className}>
      <div className="absolute left-[15px] top-[11px]"><Fit w={17}>A</Fit></div>
      <div className="absolute left-[19px] top-[61px]"><Fit w={13}>B</Fit></div>
      <Caption size={29} len={33} className="left-[44px] top-[2px] h-[103px] w-[63px] via-[#4a4a4a] via-18%">Ln</Caption>
      <div className="absolute left-[119px] top-[36px]"><Fit w={12}>L</Fit></div>
    </div>
  );
}

function Canvas() {
  const ox = 1511, oy = 653;
  const vs = [1725, 2100, 2475, 2850, 3225, 3600], hs = [717, 842, 967, 1092, 1217, 1342, 1467, 1592];
  const grid = vs.map((x) => `M${x} 653V1637`).join("") + hs.map((y) => `M1511 ${y}H3647`).join("");
  return (
    <div className="relative h-[984px] shrink-0 overflow-hidden bg-[#d4d0c8]">
      <svg className="absolute left-0 top-0" width="2136" height="984" viewBox={`${ox} ${oy} 2136 984`}>
        <path d={grid} stroke="#b9b5ae" strokeWidth="2.200" />
        <rect x="1777" y="872" width="1698" height="475" fill="#f92aa5" stroke="#a2457f" strokeWidth="2.500" />
        <path d="M2100 873V1346M2475 873V1346M2850 873V1346M3225 873V1346M1778 967H3474M1778 1092H3474M1778 1217H3474M1778 1342H3474" stroke="#ee279f" strokeWidth="2" />
        {wires.map(([a, b, c, d]) => <path key={a + "-" + b} d={`M${a} ${b}C${(a + c) / 2} ${b} ${(a + c) / 2} ${d} ${c} ${d}`} fill="none" stroke="#6d1049" strokeWidth="7" />)}
        {ports.map(([x, y]) => <Port key={x + "-" + y} x={x} y={y} />)}
      </svg>
      <div className="absolute left-[-1511px] top-[-653px]">
        {params.map(([t, x, y, w]) => (
          <div key={t} className={"flex h-[51px] w-[126px] items-start justify-center pt-[4px] " + nodeCls} style={{ left: x, top: y }}><Fit w={w}>{t}</Fit></div>
        ))}
        <LnNode className="left-[2263px] top-[931px]" />
        <LnNode className="left-[2271px] top-[1101px]" />
        <div className={"left-[2629px] top-[969px] h-[201px] w-[263px] " + nodeCls}>
          <div className="absolute left-[16px] top-[32px]"><Fit w={61}>lineA</Fit></div>
          <div className="absolute left-[18px] top-[127px]"><Fit w={59}>lineB</Fit></div>
          <Caption size={30} len={159} className="left-[87px] top-[2px] h-[193px] w-[62px] via-[#4a4a4a] via-10%">isIntersect</Caption>
          <div className="absolute left-[160px] top-[80px]"><Fit w={76}>Result</Fit></div>
        </div>
        <div className="absolute left-[3050px] top-[1021px] flex h-[99px] w-[400px] flex-col overflow-hidden rounded-[7px] border-[2.500px] border-[#4a4028] bg-[#fff95c] font-['Liberation_Mono',monospace] text-[27px] leading-[30px] text-[#222]">
          <div className="flex h-[46px] justify-end border-t-2 border-[#f4f0a0] bg-[#d8d24b] pr-[32px] pt-[8px]"><Fit w={44}>{"{0}"}</Fit></div>
          <div className="flex pt-[7px] [-webkit-text-stroke:0.4px_#222]"><div className="ml-[10px]"><Fit w={14}>0</Fit></div><div className="ml-[15px]"><Fit w={64}>True</Fit></div></div>
          <div className="absolute left-[32px] top-[2px] h-full w-[2px] bg-[#aaa540]/60" />
        </div>
        <div className="absolute left-[1508px] top-[1566px] h-[70px] w-[20px] border-[3px] border-black bg-linear-to-b from-[#d8d8d8] via-[#8a8a8a] via-40% to-[#777]" />
      </div>
    </div>
  );
}

function Grasshopper() {
  return (
    <div className="absolute left-[1504px] top-[160px] flex h-[1536px] w-[2160px] flex-col border-l-2 border-t-2 border-[#8b8b8b] bg-[#f0f0f0] shadow-[0_2px_22px_rgba(0,0,0,0.5)]">
      <div className="flex h-[76px] w-[2141px] shrink-0 items-center bg-white">
        <div className={"ml-[20px] text-[31px] text-[#999] " + NOTO}><Fit w={343}>Grasshopper - isIntersect*</Fit></div>
        <div className="mr-[52px] ml-auto h-[3px] w-[20px] bg-[#999]" />
      </div>
      <div className={"h-[60px] w-[2141px] shrink-0 bg-linear-to-r from-[#f0f0f0] to-[#fcfcfc] text-[29px] text-black " + NOTO}>
        <Labels items={ghMenu} origin={1506} className="h-[58px]" />
      </div>
      <div className={"flex h-[57px] w-[2141px] shrink-0 overflow-hidden text-[29px] text-[#777] " + NOTO}>
        <div className="relative z-10 h-[57px] w-[94px] shrink-0">
          <svg className="absolute left-0 top-0 overflow-visible" width="110" height="64"><defs><linearGradient id="tab" x1="0" y1="0" x2="0" y2="1"><stop offset="0" stopColor="#fff" /><stop offset=".5" stopColor="#fff" /><stop offset="1" stopColor="#d3d3d3" /></linearGradient></defs><path d="M1 64V14Q1 1 14 1H80Q94 1 94 14V38Q95 55 108 56H2200V64z" fill="url(#tab)" stroke="#9d9d9d" strokeWidth="2.500" /></svg>
          <div className="relative ml-[23px] mt-[1px] leading-[46px] text-black"><Fit w={50}>Prm</Fit></div>
        </div>
        <Labels items={ghTabs} origin={1600} className="h-[57px]" />
      </div>
      <Ribbon />
      <div className="ml-[2px] flex w-[2139px] flex-col border-l-[3px] border-[#8a8a84]">
        <CanvasBar />
        <Canvas />
      </div>
      <div className="h-[6px] w-[2141px] shrink-0 bg-white" />
      <div className={"flex flex-1 items-center pl-[8px] text-[29px] text-[#1b1b1f] " + NOTO}>
        <svg width="40" height="42"><ellipse cx="20" cy="21" rx="18.500" ry="19.500" fill="url(#info)" stroke="#1b2e9c" strokeWidth="3" /><rect x="16" y="7" width="9" height="17" rx="4" fill="#8fe4f2" stroke="#142a80" strokeWidth="2.200" /><circle cx="20.500" cy="31" r="4" fill="#8fe4f2" stroke="#142a80" strokeWidth="2.200" /></svg>
        <div className="ml-[7px]"><Fit w={584}>Save successfully completed... (130 seconds ago)</Fit></div>
      </div>
    </div>
  );
}

export default function App() {
  return (
    <div className="relative flex h-[1809px] w-[3647px] flex-col overflow-hidden bg-[#dfe2ea]">
      <Defs />
      <div className={"h-[45px] shrink-0 bg-white text-[29px] text-[#17171c] " + NOTO}>
        <Labels items={rhinoMenu} className="h-[44px]" />
      </div>
      <div className="h-[10px] shrink-0 bg-linear-to-b from-[#f2f2f2] via-[#dfe2ea] via-40% to-[#dfe2ea]" />
      <div className="flex h-[121px] shrink-0 border-b-2 border-[#c3c8d4]">
        <Grip className="ml-[3px] mt-[2px] h-[117px]" />
        <div className="ml-[4px] flex h-[113px] flex-1 flex-col bg-white">
          <div className={"h-[66px] pl-[3px] text-[30px] leading-[41px] text-[#17171c] " + ARIAL}><Fit w={1214}>Drag objects, tap Alt to make a duplicate, press and hold Alt to temporarily toggle osnaps:</Fit></div>
          <div className="h-[2px] bg-[#a9aeb9]" />
          <div className={"flex h-[45px] pl-[3px] text-[29px] leading-[38px] font-bold text-[#111] " + NOTO}>
            <Fit w={151}>Command:</Fit>
            <div className="ml-[10px] mt-[-1px] h-[38px] w-[2px] bg-black" />
          </div>
        </div>
      </div>
      <div className="flex h-[137px] shrink-0 border-b-2 border-[#c3c8d4]">
        <Grip className="ml-[3px] mt-[11px] h-[120px]" />
        <div className="-ml-[10px] flex flex-1 flex-col bg-transparent pt-[12px]">
          <RhinoTabs />
          <div className="ml-[14px] flex h-[86px] bg-linear-to-b from-[#fbfcfd] to-[#dfe2ea] pt-[1px]">
            <div className="-ml-[2px] flex">{topIcons.map(([ic, t], i) => <Cell key={i} icon={ic} tri={t} />)}</div>
          </div>
        </div>
      </div>
      <div className="flex h-[100px] shrink-0">
        <Grip className="ml-[3px] mt-[10px] h-[78px]" />
        <div className="ml-[4px] mt-[7px] flex flex-1 bg-linear-to-b from-white to-[#e0e3ea]">
          <div className="-ml-[2px] -mt-px flex">{subIcons.map((ic, i) => <Cell key={i} icon={ic} tri={1} />)}</div>
        </div>
      </div>
      <div className="flex min-h-0 flex-1">
        <div className="flex w-[157px] shrink-0 flex-col bg-[#e0e3eb]">
          <div className="ml-[3px] mt-[7px] h-[8px] w-[138px] border-y-2 border-[#c0c4cf]" />
          <div className="mt-[4px] grid w-[140px] grid-cols-2">
            {sideIcons.flatMap((row, r) => row.map(([ic, t], c) => <Cell key={r + "-" + c} icon={ic} tri={t} side />))}
          </div>
        </div>
        <Viewport />
      </div>
      <Grasshopper />
    </div>
  );
}
